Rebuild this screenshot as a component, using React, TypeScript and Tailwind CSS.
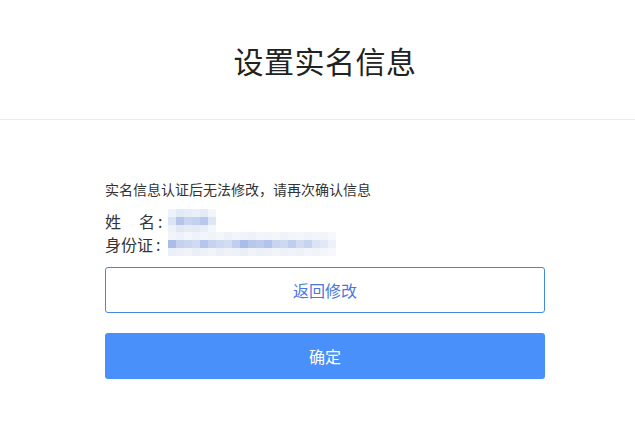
const nameCells = [
  ["#eef2f9", "#e2eaf5", "#e6edf7", "#eaf0f8", "#e4ebf6", "#f2f5fa"],
  ["#dbe4f4", "#b6c5ec", "#c9d5f0", "#c3d1ef", "#b8c7ec", "#dde6f4"],
  ["#edf1f8", "#e0e8f4", "#e6ecf6", "#e3eaf5", "#e8eef7", "#f3f6fa"],
];

const idCells = [
  ["#f1f4f9", "#eef2f8", "#f3f6fa", "#eff3f9", "#f2f5fa", "#f0f4f9", "#f4f6fa", "#eef2f8", "#f2f5fa", "#f0f3f9", "#eef2f8", "#f3f5fa", "#f1f4f9", "#f4f6fa", "#eff3f9", "#f2f5fa", "#f4f6fa", "#f0f3f9", "#f3f5fa", "#f1f4f9", "#f6f8fb"],
  ["#aabde9", "#c4d2ef", "#c9d6f0", "#d0dbf2", "#b5c6ec", "#c6d3ef", "#cdd8f1", "#d3ddf2", "#c0cfee", "#a9bcea", "#b8c8ec", "#bccbee", "#b2c4ec", "#c8d5f0", "#cdd8f1", "#bfcdee", "#d1dbf2", "#c7d4f0", "#dbe3f4", "#e2e9f6", "#eef2f8"],
  ["#eaf0f8", "#eef2f8", "#f0f4f9", "#e9eef7", "#edf1f8", "#f1f4f9", "#ebf0f8", "#eff3f9", "#edf1f8", "#e9eef7", "#f0f4f9", "#ecf1f8", "#eef2f8", "#f1f4f9", "#edf1f8", "#f0f3f9", "#eef2f8", "#f2f5fa", "#f0f4f9", "#f3f6fa", "#f6f8fb"],
];

function Mosaic({ rows }: { rows: string[][] }) {
  return (
    <div className="flex flex-col blur-[0.6px]">
      {rows.map((row, i) => (
        <div key={i} className="flex">
          {row.map((c, j) => (
            <div key={j} className="h-[8px] w-[8px]" style={{ backgroundColor: c }} />
          ))}
        </div>
      ))}
    </div>
  );
}

export default function App() {
  return (
    <div className="min-h-[440px] w-full bg-white font-['Noto_Sans_CJK_SC','Noto_Sans',sans-serif] text-[#333]">
      <div className="flex h-[120px] items-center justify-center border-b border-[#ebebeb] pl-[15px]">
        <h1 className="text-[30px] leading-none tracking-[0.5px] text-[#222]">设置实名信息</h1>
      </div>
      <div className="ml-[105px] w-[440px] pt-[61px]">
        <p className="whitespace-nowrap text-[14px] leading-[16px] text-[#333]">实名信息认证后无法修改，请再次确认信息</p>
        <div className="mt-[12px] flex h-[23px] items-center text-[16px]">
          <span className="w-[63px] shrink-0 whitespace-nowrap">
            姓<span className="ml-[18px]">名</span>
            <span className="ml-[3px]">:</span>
          </span>
          <Mosaic rows={nameCells} />
        </div>
        <div className="flex h-[23px] items-center text-[16px]">
          <span className="w-[63px] shrink-0 whitespace-nowrap">
            身份证<span className="ml-[3px]">:</span>
          </span>
          <Mosaic rows={idCells} />
        </div>
        <button className="mt-[12px] flex h-[46px] w-full items-center justify-center rounded-[3px] border border-[#3f8ae0] bg-white text-[16px] text-[#4a78dc]">
          返回修改
        </button>
        <button className="mt-[20px] flex h-[46px] w-full items-center justify-center rounded-[3px] bg-[#4a90fa] text-[16px] text-white">
          确定
        </button>
      </div>
    </div>
  );
}
